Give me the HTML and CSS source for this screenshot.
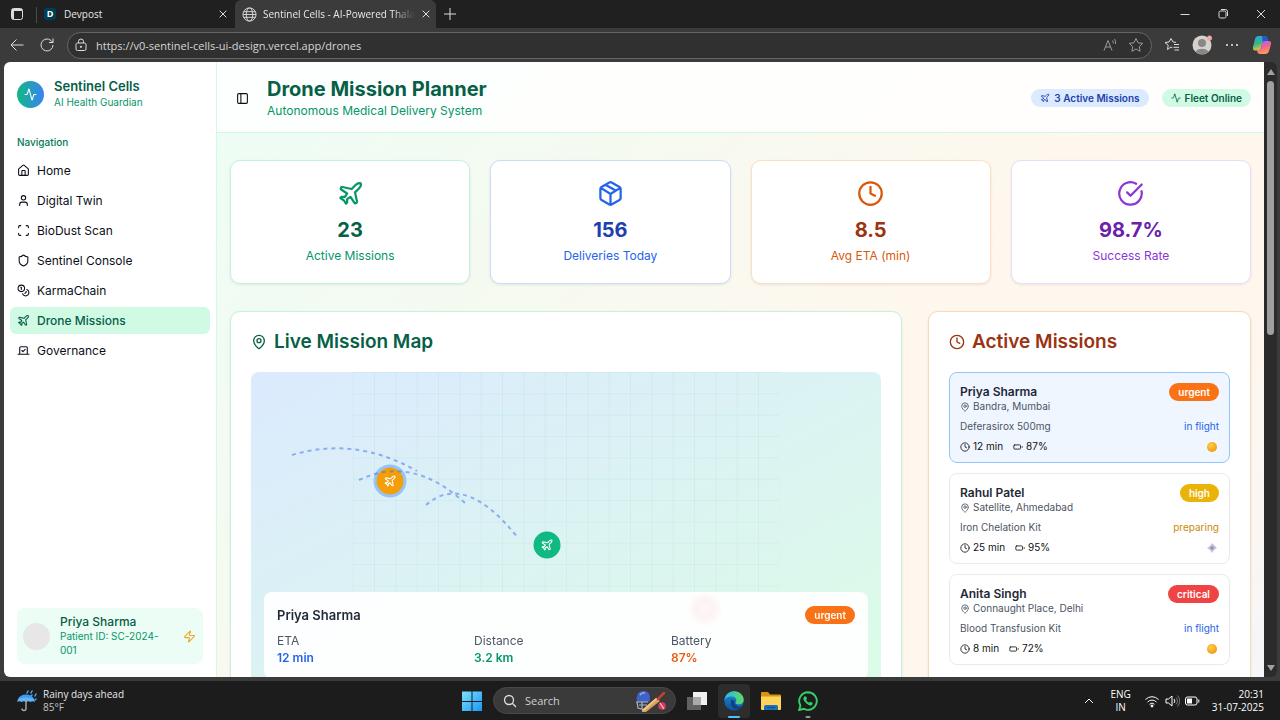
FILE: index.html
```html
<!DOCTYPE html>
<html lang="en">
<head>
<meta charset="utf-8">
<title>Sentinel Cells - AI-Powered Thalassemia Care</title>
<link rel="stylesheet" href="styles.css">
</head>
<body>
<svg class="sprite" aria-hidden="true">
  <symbol id="plane" viewBox="0 0 24 24"><path d="M17.8 19.2 16 11l3.5-3.5C21 6 21.5 4 21 3c-1-.5-3 0-4.5 1.5L13 8 4.8 6.2c-.5-.1-.9.1-1.1.5l-.3.5c-.2.5-.1 1 .3 1.3L9 12l-2 3H4l-1 1 3 2 2 3 1-1v-3l3-2 3.5 5.3c.3.4.8.5 1.3.2l.5-.2c.4-.3.6-.7.5-1.2z"/></symbol>
  <symbol id="activity" viewBox="0 0 24 24"><path d="M22 12h-2.48a2 2 0 0 0-1.93 1.46l-2.35 8.36a.25.25 0 0 1-.48 0L9.24 2.18a.25.25 0 0 0-.48 0l-2.35 8.36A2 2 0 0 1 4.49 12H2"/></symbol>
  <symbol id="house" viewBox="0 0 24 24"><path d="M15 21v-8a1 1 0 0 0-1-1h-4a1 1 0 0 0-1 1v8"/><path d="M3 10a2 2 0 0 1 .709-1.528l7-5.999a2 2 0 0 1 2.582 0l7 5.999A2 2 0 0 1 21 10v9a2 2 0 0 1-2 2H5a2 2 0 0 1-2-2z"/></symbol>
  <symbol id="user" viewBox="0 0 24 24"><path d="M19 21v-2a4 4 0 0 0-4-4H9a4 4 0 0 0-4 4v2"/><circle cx="12" cy="7" r="4"/></symbol>
  <symbol id="scan" viewBox="0 0 24 24"><path d="M3 7V5a2 2 0 0 1 2-2h2M17 3h2a2 2 0 0 1 2 2v2M21 17v2a2 2 0 0 1-2 2h-2M7 21H5a2 2 0 0 1-2-2v-2"/></symbol>
  <symbol id="shield" viewBox="0 0 24 24"><path d="M20 13c0 5-3.5 7.5-7.66 8.95a1 1 0 0 1-.67-.01C7.5 20.5 4 18 4 13V6a1 1 0 0 1 1-1c2 0 4.5-1.2 6.24-2.72a1.17 1.17 0 0 1 1.52 0C14.51 3.81 17 5 19 5a1 1 0 0 1 1 1z"/></symbol>
  <symbol id="coins" viewBox="0 0 24 24"><circle cx="8" cy="8" r="6"/><path d="M18.09 10.37A6 6 0 1 1 10.34 18M7 6h1v4M16.71 13.88l.7.71-2.82 2.82"/></symbol>
  <symbol id="vote" viewBox="0 0 24 24"><path d="m9 12 2 2 4-4M5 7c0-1.1.9-2 2-2h10a2 2 0 0 1 2 2v12H5V7ZM22 19H2"/></symbol>
  <symbol id="package" viewBox="0 0 24 24"><path d="M11 21.73a2 2 0 0 0 2 0l7-4A2 2 0 0 0 21 16V8a2 2 0 0 0-1-1.73l-7-4a2 2 0 0 0-2 0l-7 4A2 2 0 0 0 3 8v8a2 2 0 0 0 1 1.73zM12 22V12M3.3 7l7.703 4.734a2 2 0 0 0 1.994 0L20.7 7M7.5 4.27l9 5.15"/></symbol>
  <symbol id="clock" viewBox="0 0 24 24"><circle cx="12" cy="12" r="10"/><path d="M12 6v6l4 2"/></symbol>
  <symbol id="check" viewBox="0 0 24 24"><path d="M21.801 10A10 10 0 1 1 17 3.335"/><path d="m9 11 3 3L22 4"/></symbol>
  <symbol id="pin" viewBox="0 0 24 24"><path d="M20 10c0 4.993-5.539 10.193-7.399 11.799a1 1 0 0 1-1.202 0C9.539 20.193 4 14.993 4 10a8 8 0 0 1 16 0"/><circle cx="12" cy="10" r="3"/></symbol>
  <symbol id="battery" viewBox="0 0 24 24"><rect x="2" y="7" width="16" height="10" rx="2"/><path d="M22 11v2"/></symbol>
  <symbol id="zap" viewBox="0 0 24 24"><path d="M4 14a1 1 0 0 1-.78-1.63l9.9-10.2a.5.5 0 0 1 .86.46l-1.92 6.02A1 1 0 0 0 13 10h7a1 1 0 0 1 .78 1.63l-9.9 10.2a.5.5 0 0 1-.86-.46l1.92-6.02A1 1 0 0 0 11 14z"/></symbol>
  <symbol id="panel" viewBox="0 0 24 24"><rect x="3" y="3" width="18" height="18" rx="2"/><path d="M9 3v18"/></symbol>
  <symbol id="close" viewBox="0 0 12 12"><path d="M2 2l8 8M10 2l-8 8"/></symbol>
</svg>

<div class="tabstrip">
  <button class="tab-menu" aria-label="Tab actions"><svg viewBox="0 0 14 14"><rect x="1.5" y="1.5" width="11" height="11" rx="2"/><path d="M2 3h10M3 4v8" stroke-width="2"/></svg></button>
  <span class="tab-divider"></span>
  <div class="tab">
    <span class="devpost">D</span><span class="tab-title">Devpost</span>
    <button class="tab-close" aria-label="Close Devpost tab"><svg><use href="#close"/></svg></button>
  </div>
  <div class="tab active">
    <svg class="globe" viewBox="0 0 16 16"><circle cx="8" cy="8" r="7"/><ellipse cx="8" cy="8" rx="3.5" ry="7"/><path d="M1 8h14M2 5h12M2 11h12"/></svg>
    <span class="tab-title fade">Sentinel Cells - AI-Powered Thala</span>
    <button class="tab-close" aria-label="Close Sentinel Cells tab"><svg><use href="#close"/></svg></button>
  </div>
  <button class="new-tab" aria-label="New tab"><svg viewBox="0 0 14 14"><path d="M7 1v12M1 7h12"/></svg></button>
  <div class="window-buttons">
    <button aria-label="Minimize"><svg viewBox="0 0 12 12"><path d="M1.500 6.500h9"/></svg></button>
    <button aria-label="Restore"><svg viewBox="0 0 12 12"><rect x="2" y="3" width="7" height="7" rx="1.500"/><path d="M4 1.500h4.500a2 2 0 0 1 2 2V8"/></svg></button>
    <button aria-label="Close window"><svg><use href="#close"/></svg></button>
  </div>
</div>

<div class="toolbar">
  <button aria-label="Back"><svg viewBox="0 0 16 16"><path d="M14.500 8H2M7.500 2.500 2 8l5.500 5.500"/></svg></button>
  <button aria-label="Reload"><svg viewBox="0 0 16 16"><path d="M14 8a6 6 0 1 1-2-4.500L14 5.500M14 1.500v4h-4"/></svg></button>
  <div class="address">
    <svg class="lock" viewBox="0 0 14 14"><rect x="2" y="5" width="10" height="7.500" rx="1.500"/><path d="M4.500 5V3.500a2.500 2.500 0 0 1 5 0V5"/><circle cx="7" cy="8.800" r=".7" fill="#ccc"/></svg>
    <input type="text" aria-label="Address" value="https://v0-sentinel-cells-ui-design.vercel.app/drones">
    <button aria-label="Read aloud"><svg class="dim" viewBox="0 0 16 16"><path d="M2 13.500 6 3.500l4 10M3.500 10h5M10.500 3.500a4 4 0 0 1 .8 3M12.500 2a6 6 0 0 1 1 5"/></svg></button>
    <button aria-label="Favorite"><svg class="dim" viewBox="0 0 16 16"><path d="m8 1.500 2 4.300 4.700.6-3.400 3.200.8 4.700L8 12l-4.100 2.300.8-4.700L1.300 6.400 6 5.800z"/></svg></button>
  </div>
  <button aria-label="Favorites list"><svg viewBox="0 0 16 16"><path d="M8.500 10.800 7 10l-3.500 2.500.7-4.200L1 5.500l4-.5 2-3.500L9 5l3 .4M10 7.500h5M9.500 10.300H15M10.500 13H15"/></svg></button>
  <button aria-label="Profile"><svg class="avatar" viewBox="0 0 20 20"><circle cx="10" cy="10" r="9.500" fill="#d5d2ce"/><circle cx="10" cy="8" r="4" fill="#8a8784"/><path d="M3.500 16.800a7 5 0 0 1 13 0 9.500 9.500 0 0 1-13 0z" fill="#8a8784"/><circle cx="17.500" cy="3" r="2.500" fill="#f3a8a4"/></svg></button>
  <button aria-label="Settings and more"><svg class="dots" viewBox="0 0 16 16"><circle cx="3" cy="8" r="1"/><circle cx="8" cy="8" r="1"/><circle cx="13" cy="8" r="1"/></svg></button>
  <button aria-label="Copilot"><svg class="copilot" viewBox="0 0 20 20">
    <defs><linearGradient id="cpa" x2=".3" y2="1"><stop stop-color="#2aa7e8"/><stop offset=".55" stop-color="#35b58a"/><stop offset="1" stop-color="#e8c341"/></linearGradient><linearGradient id="cpb" x2=".3" y2="1"><stop stop-color="#a765f0"/><stop offset=".5" stop-color="#ec5f9c"/><stop offset="1" stop-color="#fb9a57"/></linearGradient></defs>
    <path d="M6 1h6.500Q15 1 15.500 4l.5 2h-3q-2 0-2.600 2L9 13q-.8 2.500-3 2.500H3Q.5 15.500 1 12l2-8q.8-3 3-3z" fill="url(#cpa)"/><path d="M10 1h2.500Q15 1 15.500 4l.5 2h-3q-1.500 0-2.300 1z" fill="#2356d8"/>
    <path d="M14 19H8q-2.300 0-2.800-2.500L5 15h1.500Q8.500 15 9 13l1.500-5.500Q11.200 6 13 6h4q2.600 0 2 3l-2 7q-.8 3-3 3z" fill="url(#cpb)"/></svg></button>
</div>

<div class="viewport">
  <div class="page">
    <aside class="sidebar">
      <div class="brand">
        <span class="logo"><svg class="icon"><use href="#activity"/></svg></span>
        <div><div class="brand-name">Sentinel Cells</div><div class="brand-sub">AI Health Guardian</div></div>
      </div>
      <nav>
        <h2>Navigation</h2>
        <a href="#home"><svg class="icon"><use href="#house"/></svg>Home</a>
        <a href="#twin"><svg class="icon"><use href="#user"/></svg>Digital Twin</a>
        <a href="#scan"><svg class="icon"><use href="#scan"/></svg>BioDust Scan</a>
        <a href="#console"><svg class="icon"><use href="#shield"/></svg>Sentinel Console</a>
        <a href="#karma"><svg class="icon"><use href="#coins"/></svg>KarmaChain</a>
        <a href="#drones" class="current"><svg class="icon"><use href="#plane"/></svg>Drone Missions</a>
        <a href="#governance"><svg class="icon"><use href="#vote"/></svg>Governance</a>
      </nav>
      <div class="patient">
        <span class="face"></span>
        <div class="patient-text"><div class="patient-name">Priya Sharma</div><div class="patient-id">Patient ID: SC-2024-001</div></div>
        <svg class="icon"><use href="#zap"/></svg>
      </div>
    </aside>

    <main>
      <header>
        <button class="toggle" aria-label="Toggle sidebar"><svg class="icon"><use href="#panel"/></svg></button>
        <div class="heading"><h1>Drone Mission Planner</h1><p>Autonomous Medical Delivery System</p></div>
        <span class="pill blue"><svg class="icon"><use href="#plane"/></svg>3 Active Missions</span>
        <span class="pill green"><svg class="icon"><use href="#activity"/></svg>Fleet Online</span>
      </header>

      <div class="content">
        <section class="stats">
          <div class="stat c-green"><svg class="icon"><use href="#plane"/></svg><strong>23</strong><span>Active Missions</span></div>
          <div class="stat c-blue"><svg class="icon"><use href="#package"/></svg><strong>156</strong><span>Deliveries Today</span></div>
          <div class="stat c-orange"><svg class="icon"><use href="#clock"/></svg><strong>8.5</strong><span>Avg ETA (min)</span></div>
          <div class="stat c-purple"><svg class="icon"><use href="#check"/></svg><strong>98.7%</strong><span>Success Rate</span></div>
        </section>

        <section class="panels">
          <div class="panel map-panel">
            <h2><svg class="icon"><use href="#pin"/></svg>Live Mission Map</h2>
            <div class="map">
              <svg class="grid" viewBox="0 0 400 300"><defs><pattern id="cells" width="20" height="20" patternUnits="userSpaceOnUse"><path d="M20 0H0V20" fill="none" stroke="#10b981" stroke-width="1"/></pattern></defs><rect width="400" height="300" fill="url(#cells)"/></svg>
              <span class="drone orange selected"><svg class="icon"><use href="#plane"/></svg></span>
              <span class="drone emerald"><svg class="icon"><use href="#plane"/></svg></span>
              <span class="drone red"><svg class="icon"><use href="#plane"/></svg></span>
              <svg class="routes" viewBox="0 0 630 320"><path d="M41 83Q104 64 166 99"/><path d="M108 108Q162 82 216 133"/><path d="M175 133Q214 99 267 166"/></svg>
              <div class="popup">
                <div class="popup-head"><h3>Priya Sharma</h3><span class="badge urgent">urgent</span></div>
                <dl>
                  <div><dt>ETA</dt><dd class="blue-text">12 min</dd></div>
                  <div><dt>Distance</dt><dd class="green-text">3.2 km</dd></div>
                  <div><dt>Battery</dt><dd class="orange-text">87%</dd></div>
                </dl>
              </div>
            </div>
          </div>

          <div class="panel list-panel">
            <h2><svg class="icon"><use href="#clock"/></svg>Active Missions</h2>
            <article class="mission chosen">
              <div class="row top"><h3>Priya Sharma</h3><span class="badge urgent">urgent</span></div>
              <p class="place"><svg class="icon"><use href="#pin"/></svg>Bandra, Mumbai</p>
              <div class="row"><span>Deferasirox 500mg</span><span class="blue-text">in flight</span></div>
              <div class="row facts"><span><svg class="icon"><use href="#clock"/></svg>12 min</span><span><svg class="icon"><use href="#battery"/></svg>87%</span><i class="sun"></i></div>
            </article>
            <article class="mission">
              <div class="row top"><h3>Rahul Patel</h3><span class="badge high">high</span></div>
              <p class="place"><svg class="icon"><use href="#pin"/></svg>Satellite, Ahmedabad</p>
              <div class="row"><span>Iron Chelation Kit</span><span class="yellow-text">preparing</span></div>
              <div class="row facts"><span><svg class="icon"><use href="#clock"/></svg>25 min</span><span><svg class="icon"><use href="#battery"/></svg>95%</span><svg class="wind" viewBox="0 0 10 10"><path d="M5 0l2 2 3 3-3 2-2 3-2-3-3-2 3-2z" fill="#c9c2dc"/><path d="M4 3l3 1-1 3-3-1z" fill="#9b90bd"/></svg></div>
            </article>
            <article class="mission">
              <div class="row top"><h3>Anita Singh</h3><span class="badge critical">critical</span></div>
              <p class="place"><svg class="icon"><use href="#pin"/></svg>Connaught Place, Delhi</p>
              <div class="row"><span>Blood Transfusion Kit</span><span class="blue-text">in flight</span></div>
              <div class="row facts"><span><svg class="icon"><use href="#clock"/></svg>8 min</span><span><svg class="icon"><use href="#battery"/></svg>72%</span><i class="sun"></i></div>
            </article>
          </div>
        </section>
      </div>
    </main>
  </div>
  <div class="scrollbar" aria-hidden="true"><span class="arrow up"></span><span class="track"><span class="thumb"></span></span><span class="arrow down"></span></div>
</div>

<footer class="taskbar">
  <div class="weather">
    <svg viewBox="0 0 20 22"><path d="M0 12Q1 5.500 9 5.500T18 12q-2.500-1.500-4.500 0-2-1.500-4.500 0-2-1.500-4.500 0Q2 10.500 0 12z" fill="#62b4f6"/><path d="M1 9q2-4.500 8-4.500T17 9q-8-3-16 0z" fill="#3f9bea"/><path d="M9 11v7.500a2 2 0 0 1-4 0" fill="none" stroke="#aaa" stroke-width="1.400"/><path d="M10 3l1-2M14 3l1-2M14 6l1-1M18 6l1-2M18 10l1-1" stroke="#4aa6f0" stroke-width="1.500" stroke-linecap="round"/></svg>
    <div><div>Rainy days ahead</div><div class="soft">85°F</div></div>
  </div>
  <div class="apps">
    <button aria-label="Start"><svg viewBox="0 0 20 20"><defs><linearGradient id="win" x2="1" y2="1"><stop stop-color="#7fe0ff"/><stop offset="1" stop-color="#1797f2"/></linearGradient></defs><path d="M0 .5h9.500V10H0zM10.500.5H20V10h-9.500zM0 11h9.500v9H0zM10.500 11H20v9h-9.500z" fill="url(#win)"/></svg></button>
    <label class="search">
      <svg viewBox="0 0 14 14"><circle cx="6" cy="6" r="4.500"/><path d="m9.300 9.300 3.700 3.700"/></svg>
      <input type="text" placeholder="Search" aria-label="Search">
      <svg class="cricket" viewBox="0 0 34 22"><path d="M3 12Q1 2 9 1q8 0 7 9l-1 2z" fill="#3e62c8"/><path d="M6 5q2-3 5-2" stroke="#8fb0f5" stroke-width="1.500" fill="none"/><path d="M2 12h12M3 12l1 6 7 2M5 15h8M8 12v8" stroke="#aab4cc" stroke-width="1.200" fill="none"/><path d="M8 20 22 8l4 3-14 11H8z" fill="#d9a25c"/><path d="m8 20 14-12 1.500 1L10 21z" fill="#f3c786"/><path d="m24 9 6-6" stroke="#c7402f" stroke-width="2.500" stroke-linecap="round"/><circle cx="28" cy="16" r="3.800" fill="#d8385b"/><path d="m26 13 4 6" stroke="#f6c2cb"/></svg>
    </label>
    <button aria-label="Task view"><svg viewBox="0 0 20 20"><rect x="6" y="1" width="14" height="13" fill="#f0f0f0"/><rect x="0" y="6" width="14" height="13" fill="#6d6d6d" fill-opacity=".85"/><path d="M6 6h8v8H6z" fill="#aaa"/></svg></button>
    <button class="open" aria-label="Microsoft Edge"><svg viewBox="0 0 20 20"><defs><linearGradient id="ea"><stop stop-color="#2cb5e9"/><stop offset="1" stop-color="#5fdc62"/></linearGradient><linearGradient id="eb" x2="0" y2="1"><stop stop-color="#1b8fd9"/><stop offset="1" stop-color="#0d4fa0"/></linearGradient></defs><circle cx="10" cy="10" r="9.700" fill="url(#eb)"/><path d="M.3 9.500C1 4 5 .3 10 .3c6 0 9.700 4.200 9.700 8.500 0 3-2.200 4.700-5 4.700-2 0-3.200-.8-3.200-1.500s.8-1.200.8-2.800c0-2-2-3.700-5-3.700-3 0-6 1.500-7 4z" fill="url(#ea)"/><path d="M7.500 8.500c-2 5 1 9.500 5.500 9.500 2 0 4-.8 5.500-2.500-4 1.500-9-1-8-5.500z" fill="#103f7c"/></svg></button>
    <button aria-label="File Explorer"><svg viewBox="0 0 20 20"><path d="M0 2q0-1 1-1h6l2 2.500h10q1 0 1 1V8H0z" fill="#d7940c"/><path d="M0 5.500h20V18q0 1-1 1H1q-1 0-1-1z" fill="#ffd35a"/><path d="M3 19v-3.500q0-1.500 1.500-1.500h11q1.500 0 1.500 1.500V19z" fill="#1c6fba"/><path d="M6 16.500h8" stroke="#0d4c8c"/></svg></button>
    <button class="running" aria-label="WhatsApp"><svg viewBox="0 0 20 20"><path d="M10 1.200a8.800 8.800 0 0 0-7.600 13.200L1.200 19l4.700-1.200A8.800 8.800 0 1 0 10 1.200z" fill="none" stroke="#35cf67" stroke-width="1.900"/><path d="M6.500 5.500 8 5.300l1 2.400-.9 1.200q1 2 3 2.900l1.200-1.100 2.300 1.100q.2 1.700-1.100 2.400-2 .9-5-1.600T5.300 8q0-1.700 1.200-2.500z" fill="#35cf67"/></svg></button>
  </div>
  <div class="tray">
    <button aria-label="Hidden icons"><svg viewBox="0 0 12 12"><path d="M2 8l4-4 4 4"/></svg></button>
    <div class="lang">ENG<br>IN</div>
    <div class="sys">
      <svg viewBox="0 0 16 16"><path d="M1.500 6.500a9 9 0 0 1 13 0M3.500 9a6.200 6.200 0 0 1 9 0M5.500 11.300a3.500 3.500 0 0 1 5 0"/><circle cx="8" cy="13" r="1" fill="#fff"/></svg>
      <svg viewBox="0 0 16 16"><path d="M2 6h2.500L8 3v10l-3.500-3H2zM10 6a3 3 0 0 1 0 4"/><path d="M12 4.500a5 5 0 0 1 0 7M13.500 2.500a8 8 0 0 1 0 11" stroke="#777"/></svg>
      <svg viewBox="0 0 16 16"><rect x="1.500" y="4" width="11.500" height="8" rx="2"/><path d="M14.800 6.500v3"/><rect x="3" y="5.500" width="5" height="5" fill="#fff" stroke="none"/></svg>
    </div>
    <div class="time">20:31<br>31-07-2025</div>
  </div>
</footer>
</body>
</html>
```
FILE: styles.css
```css
* { box-sizing: border-box; margin: 0; padding: 0; }
html, body { height: 100%; }
body {
  display: flex; flex-direction: column; overflow: hidden;
  background: #3b3b3b; color: #0b0f19;
  font: 12px/17px Inter, "Liberation Sans", sans-serif;
}
button { border: 0; background: none; color: inherit; font: inherit; display: flex; align-items: center; justify-content: center; }
input { border: 0; background: none; outline: 0; color: inherit; font: inherit; min-width: 0; }
a { color: inherit; text-decoration: none; }
svg { flex: none; }
.sprite { display: none; }
.icon { width: 13px; height: 13px; fill: none; stroke: currentColor; stroke-width: 2; stroke-linecap: round; stroke-linejoin: round; }

/* browser chrome */
.tabstrip, .toolbar, .taskbar { font-family: "Open Sans", "Noto Sans", sans-serif; color: #e8e8e8; }
.tabstrip svg, .toolbar svg { fill: none; stroke: #dcdcdc; stroke-width: 1; }
.tabstrip { display: flex; height: 28px; background: #202020; font-size: 10px; align-items: stretch; }
.tab-menu { width: 34px; }
.tab-menu svg { width: 14px; height: 14px; }
.tab-divider { width: 1px; background: #4a4a4a; margin: 7px 2px 5px; }
.tab { display: flex; align-items: center; gap: 8px; width: 196px; padding: 0 7px 0 5px; }
.tab.active { background: #3b3b3b; border-radius: 6px 6px 0 0; width: 201px; gap: 6px; padding: 0 8px 0 7px; }
.devpost { width: 12px; height: 12px; border-radius: 3px; background: #003e54; color: #fff; font-size: 9px; line-height: 12px; font-weight: 700; text-align: center; }
.tab .globe { width: 15px; height: 15px; }
.tab-title { flex: 1; white-space: nowrap; }
.fade { mask-image: linear-gradient(to right, #000 85%, transparent); }
.tab-close svg { width: 10px; height: 10px; stroke: #fff; }
.new-tab { width: 28px; }
.new-tab svg { width: 14px; height: 14px; }
.window-buttons { display: flex; margin-left: auto; }
.window-buttons button { width: 38px; }
.window-buttons svg { width: 12px; height: 12px; }
.toolbar { display: flex; align-items: center; height: 34px; padding: 0 3px 0 2px; background: #3b3b3b; font-size: 11px; }
.toolbar > button { width: 30px; }
.toolbar svg { width: 16px; height: 16px; }
.toolbar .lock { width: 14px; height: 14px; }
.toolbar .avatar, .toolbar .copilot { width: 20px; height: 20px; stroke: none; }
.toolbar .dots { fill: #eee; stroke: none; }
.toolbar .dim { stroke: #9a9a9a; }
.address { flex: 1; display: flex; align-items: center; gap: 8px; height: 27px; margin: 0 5px; padding: 0 7px 0 6px; border: 1px solid #656565; border-radius: 14px; background: #303030; color: #d6d6d6; }
.address input { flex: 1; }
.address button + button { margin-left: 2px; }

/* page */
.viewport { flex: 1; min-height: 0; display: flex; margin: 0 3px 4px 4px; }
.page { flex: 1; min-width: 0; display: flex; overflow: hidden; background: #fff; border-radius: 6px 0 0 6px; }
.sidebar { width: 213px; flex: none; display: flex; flex-direction: column; border-right: 1px solid #d1fae5; }
.brand { display: flex; align-items: center; gap: 10px; padding: 16px 13px 12px; line-height: 16px; }
.logo { width: 27px; height: 27px; border-radius: 50%; background: linear-gradient(90deg, #10b981, #3b82f6); color: #fff; display: flex; align-items: center; justify-content: center; }
.brand-name { font-size: 13px; font-weight: 600; color: #065f46; }
.brand-sub { font-size: 10px; color: #059669; }
nav { flex: 1; padding: 8px 6px 0; display: flex; flex-direction: column; gap: 3px; }
nav h2 { font-size: 10px; line-height: 24px; font-weight: 500; color: #047857; padding-left: 7px; }
nav a { display: flex; align-items: center; gap: 7px; height: 27px; padding: 0 7px; border-radius: 6px; }
nav .current { background: #d1fae5; color: #065f46; font-weight: 500; }
.patient { display: flex; align-items: center; gap: 10px; margin: 13px; padding: 7px 7px 7px 6px; border-radius: 8px; background: #ecfdf5; }
.face { width: 27px; height: 27px; border-radius: 50%; background: #e7e7e7; flex: none; }
.patient-text { flex: 1; line-height: 14px; }
.patient-name { font-weight: 500; color: #065f46; }
.patient-id { font-size: 10px; color: #059669; }
.patient .icon { color: #f5a524; }

main { flex: 1; min-width: 0; background: linear-gradient(135deg, #ecfdf5, #fff7ed 60%, #fff7ed 75%, #f6f6f8); }
header { display: flex; align-items: center; height: 71px; padding: 2px 13px 0; background: rgba(255, 255, 255, .85); border-bottom: 1px solid #d1fae5; }
.toggle { width: 24px; height: 24px; margin-right: 13px; }
.heading { flex: 1; }
h1 { font-size: 20px; line-height: 25px; font-weight: 700; color: #065f46; }
.heading p { line-height: 18px; color: #059669; }
.pill { display: flex; align-items: center; gap: 4px; height: 18px; padding: 0 9px; border-radius: 9px; font-size: 10px; font-weight: 600; }
.pill .icon { width: 10px; height: 10px; }
.pill + .pill { margin-left: 13px; }
.pill.blue { background: #dbeafe; color: #1e40af; }
.pill.green { background: #d1fae5; color: #065f46; }
.content { padding: 27px 13px; display: flex; flex-direction: column; gap: 27px; }
.stats { display: grid; grid-template-columns: repeat(4, 1fr); gap: 20px; }
.stat, .panel { background: #fff; border: 1px solid; border-radius: 10px; box-shadow: 0 1px 3px rgba(0, 0, 0, .08); }
.stat { display: flex; flex-direction: column; align-items: center; padding: 19px 20px; }
.stat .icon { width: 27px; height: 27px; margin-bottom: 10px; }
.stat strong { font-size: 20px; line-height: 27px; }
.stat span { line-height: 17px; margin-top: 3px; }
.stat.c-green { color: #059669; border-color: #c3f2dd; }
.stat.c-blue { color: #2563eb; border-color: #cadcf8; }
.stat.c-orange { color: #d9580c; border-color: #fbdfc0; }
.stat.c-purple { color: #8b35d6; border-color: #eaddf8; }
.c-green strong { color: #065f46; }
.c-blue strong { color: #1e40af; }
.c-orange strong { color: #9a3412; }
.c-purple strong { color: #6b21a8; }

.panels { display: grid; grid-template-columns: repeat(3, 1fr); gap: 26px; }
.panel { padding: 20px; }
.map-panel { grid-column: span 2; border-color: #c3f2dd; }
.list-panel { border-color: #fbd9b5; display: flex; flex-direction: column; gap: 10px; }
.panel h2 { display: flex; align-items: center; gap: 7px; font-size: 19px; line-height: 20px; font-weight: 600; color: #065f46; margin-bottom: 20px; }
.panel h2 .icon { width: 16px; height: 16px; }
.list-panel h2 { color: #9a3412; margin-bottom: 10px; }
.map { position: relative; height: 320px; border-radius: 8px; overflow: hidden; background: linear-gradient(to bottom right, #dbeafe, #dcfce7); }
.grid { display: block; width: 100%; height: 100%; opacity: .12; }
.routes { position: absolute; inset: 0; width: 100%; height: 100%; fill: none; stroke: #3b6fe8; stroke-opacity: .5; stroke-width: 2; stroke-dasharray: 4 4; }
.drone { position: absolute; width: 27px; height: 27px; transform: translate(-50%, -50%); border-radius: 50%; color: #fff; display: flex; align-items: center; justify-content: center; }
.drone.orange { left: 22%; top: 34%; background: #f59e0b; }
.drone.emerald { left: 47%; top: 54%; background: #10b981; }
.drone.red { left: 72%; top: 74%; background: #ef4444; }
.drone.selected { box-shadow: 0 0 0 3px #93c5fd; }
.popup { position: absolute; left: 13px; right: 13px; bottom: 13px; padding: 13px; border-radius: 8px; background: rgba(255, 255, 255, .93); backdrop-filter: blur(3px); }
.popup-head { display: flex; justify-content: space-between; align-items: center; height: 20px; margin-bottom: 7px; }
h3 { font-size: 12px; line-height: 17px; font-weight: 600; color: #1f2937; }
.popup h3 { font-size: 13px; }
dl { display: grid; grid-template-columns: repeat(3, 1fr); gap: 13px; }
dt { color: #4b5563; }
dd { font-weight: 600; }
.badge { display: block; height: 18px; line-height: 18px; padding: 0 9px; border-radius: 9px; font-size: 10px; font-weight: 600; color: #fff; }
.urgent { background: #f97316; }
.high { background: #eab308; }
.critical { background: #ef4444; }
.blue-text { color: #2563eb; }
.green-text { color: #059669; }
.orange-text { color: #ea580c; }
.yellow-text { color: #ca8a04; }

.mission { padding: 10px 10px 9px; border: 1px solid #e8ebee; border-radius: 8px; font-size: 10px; line-height: 13px; color: #4b5563; }
.mission.chosen { background: #eff6ff; border-color: #93c5fd; }
.row { display: flex; justify-content: space-between; margin-top: 7px; }
.row.top { margin: 0; height: 17px; }
.place { display: flex; align-items: center; gap: 3px; }
.mission .icon { width: 10px; height: 10px; }
.facts { justify-content: flex-start; gap: 10px; color: #111; align-items: center; }
.facts span { display: flex; align-items: center; gap: 3px; }
.sun { width: 10px; height: 10px; margin: 0 2px 0 auto; border-radius: 50%; background: radial-gradient(circle at 40% 35%, #ffd047, #f5a017 65%, #dc8410); }
.wind { width: 10px; height: 10px; margin: 0 2px 0 auto; }

.scrollbar { width: 13px; display: flex; flex-direction: column; align-items: center; padding: 7px 0 6px; gap: 6px; background: #2b2b2b; border-radius: 0 6px 6px 0; }
.arrow { border: 4px solid transparent; }
.arrow.up { border-top: 0; border-bottom: 6px solid #a0a0a0; }
.arrow.down { border-bottom: 0; border-top: 6px solid #a0a0a0; }
.track { flex: 1; width: 7px; }
.thumb { display: block; height: 44%; border-radius: 4px; background: #9f9f9f; }

/* taskbar */
.taskbar { display: grid; grid-template-columns: 1fr auto 1fr; height: 39px; background: #1c1c1c; font-size: 10px; line-height: 13px; align-items: center; }
.weather { display: flex; align-items: center; gap: 6px; padding-left: 17px; }
.weather svg { width: 20px; height: 22px; }
.soft { color: #c4c4c4; }
.apps { display: flex; align-items: center; gap: 5px; }
.apps button { position: relative; width: 32px; height: 34px; border-radius: 4px; }
.apps button svg { width: 20px; height: 20px; }
.apps .open { background: #2d2d2d; }
.open::after, .running::after { content: ""; position: absolute; bottom: 0; left: 50%; width: 12px; height: 2px; transform: translateX(-50%); border-radius: 1px; background: #4cc2ff; }
.running::after { width: 5px; background: #999; }
.search { display: flex; align-items: center; gap: 8px; width: 183px; height: 27px; padding: 0 7px 0 9px; border: 1px solid #484848; border-radius: 14px; background: #3a3a3a; font-size: 11px; }
.search input { flex: 1; width: 40px; }
.search input::placeholder { color: #cfcfcf; opacity: 1; }
.search svg { width: 14px; height: 14px; fill: none; stroke: #ddd; stroke-width: 1.3px; }
.search .cricket { width: 34px; height: 22px; stroke: none; }
.tray { display: flex; justify-content: flex-end; align-items: center; padding-right: 16px; color: #fff; }
.tray svg { width: 16px; height: 16px; fill: none; stroke: #fff; }
.tray button svg { width: 12px; height: 12px; }
.lang { margin-left: 15px; text-align: center; }
.sys { display: flex; gap: 4px; margin: 0 12px 0 13px; }
.time { text-align: right; }
```
